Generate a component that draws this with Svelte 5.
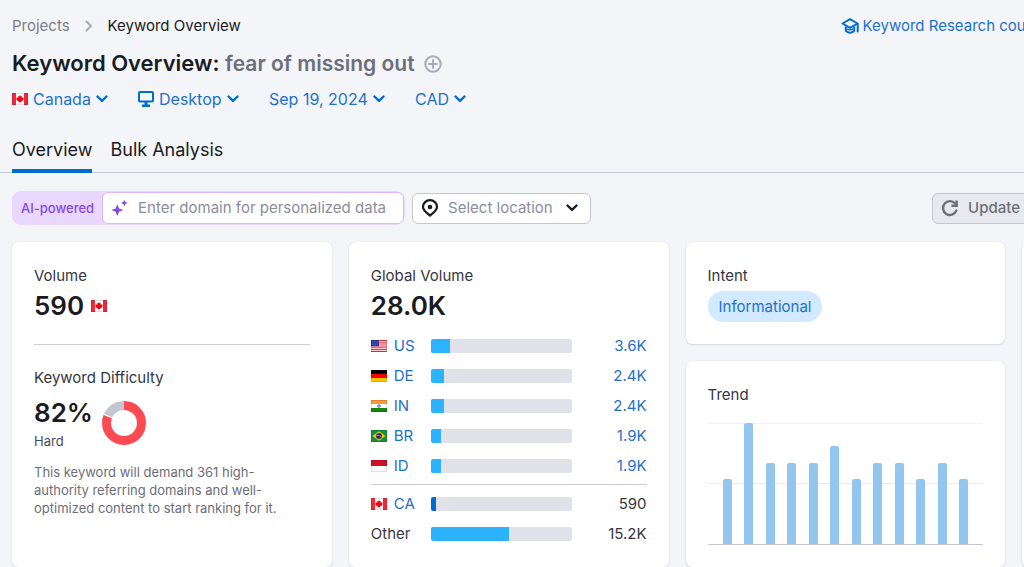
<script lang="ts">
	const filters = [
		{ label: 'Country', value: 'Canada', icon: 'ca' },
		{ label: 'Device', value: 'Desktop', icon: 'desktop' },
		{ label: 'Date', value: 'Sep 19, 2024', icon: '' },
		{ label: 'Currency', value: 'CAD', icon: '' }
	];

	const countries = [
		{ code: 'US', share: 13, volume: '3.6K' },
		{ code: 'DE', share: 9, volume: '2.4K' },
		{ code: 'IN', share: 9, volume: '2.4K' },
		{ code: 'BR', share: 7, volume: '1.9K' },
		{ code: 'ID', share: 7, volume: '1.9K' }
	];

	const trend = [54, 100, 67, 67, 67, 81, 54, 67, 67, 54, 67, 54];

	let tab = $state('Overview');
	let domain = $state('');
</script>

{#snippet chevron()}
	<svg class="chevron" width="12" height="8" viewBox="0 0 12 8" aria-hidden="true">
		<path d="M1.5 1.5 6 5.9l4.500-4.400" fill="none" stroke="currentColor" stroke-width="2.400" stroke-linecap="round" stroke-linejoin="round" />
	</svg>
{/snippet}

{#snippet flag(code: string)}
	<svg class="flag" width="16" height="12" viewBox="0 0 16 12" aria-hidden="true">
		{#if code === 'CA'}
			<path fill="#fff" d="M0 0h16v12H0z" />
			<path fill="#f02a3a" d="M0 0h4v12H0zM12 0h4v12h-4z" />
			<path fill="#f5000c" d="m8 2 1 1.500.9-.4-.2 2 1-.8 1 .8-.5 1.200.3.600-2.400 1.600.1.700-1-.1V10.500h-.5V9.100l-1 .1.100-.7-2.400-1.600.3-.6L4.300 5.100l1-.8 1 .8-.2-2 .9.4z" />
		{:else if code === 'US'}
			<path fill="#fff" d="M0 0h16v12H0z" />
			<path stroke="#f5303c" stroke-width="1.200" d="M0 .6h16M0 2.800h16M0 5h16M0 7.200h16M0 9.400h16M0 11.400h16" />
			<path fill="#2a36a0" d="M0 0h8v6.200H0z" />
			<path stroke="#8d94d0" stroke-width=".6" stroke-dasharray=".7 1" d="M1 1.500h6.500M1.500 3h6M1 4.500h6.500" />
		{:else if code === 'DE'}
			<path d="M0 0h16v4H0z" />
			<path fill="#f00" d="M0 4h16v4H0z" />
			<path fill="#fdc500" d="M0 8h16v4H0z" />
		{:else if code === 'IN'}
			<path fill="#fff" d="M0 0h16v12H0z" />
			<path fill="#ff9a33" d="M0 0h16v4H0z" />
			<path fill="#128807" d="M0 8h16v4H0z" />
			<circle cx="8" cy="6" r="1.500" fill="#8f9bd8" stroke="#5366b8" stroke-width=".5" />
		{:else if code === 'BR'}
			<path fill="#12923f" d="M0 0h16v12H0z" />
			<path fill="#f8c300" d="m8 1.200 6.600 4.800L8 10.800 1.400 6z" />
			<circle cx="8" cy="6" r="2.900" fill="#2b2a73" />
			<path fill="none" stroke="#b9bedc" stroke-width=".7" d="M5.400 5.200q3-.4 5.100 1.700" />
		{:else}
			<path fill="#fff" d="M0 0h16v12H0z" />
			<path fill="#ce1126" d="M0 0h16v6H0z" />
		{/if}
		<path fill="none" stroke="#000" stroke-opacity=".12" d="M.5.5h15v11H.5z" />
	</svg>
{/snippet}

<div class="page">
	<header>
		<div class="top-row">
			<nav class="breadcrumb" aria-label="Breadcrumb">
				<a href="#projects">Projects</a>
				<svg width="8" height="12" viewBox="0 0 8 12" aria-hidden="true">
					<path d="m1.500 1.500 4.500 4.500-4.500 4.500" fill="none" stroke="#a9abb6" stroke-width="2" stroke-linecap="round" stroke-linejoin="round" />
				</svg>
				<span>Keyword Overview</span>
			</nav>
			<a class="course" href="#course">
				<svg width="18" height="16" viewBox="0 0 18 16" fill="none" stroke="currentColor" stroke-width="2" stroke-linejoin="round" aria-hidden="true">
					<path d="M1.500 5.500 9 1.200l7.500 4.300L9 9.800z" />
					<path d="M4.800 8.500v4.200Q9 16.800 13.200 12.700V8.500" />
					<path d="M6 10.800q3 2 6 0" stroke-width="1.400" />
					<path d="M16.700 6v7.500" stroke-linecap="round" />
				</svg>
				Keyword Research course
			</a>
		</div>

		<div class="title-row">
			<h1>Keyword Overview: <span>fear of missing out</span></h1>
			<button class="add" aria-label="Add keyword to list">
				<svg width="18" height="18" viewBox="0 0 18 18" fill="none" stroke="#a9abb6" stroke-width="2" aria-hidden="true">
					<circle cx="9" cy="9" r="7.700" />
					<path d="M9 5v8M5 9h8" stroke-linecap="round" />
				</svg>
			</button>
		</div>

		<div class="filters">
			{#each filters as f}
				<label class="filter">
					{#if f.icon === 'ca'}
						{@render flag('CA')}
					{:else if f.icon === 'desktop'}
						<svg width="16" height="16" viewBox="0 0 16 16" aria-hidden="true">
							<rect x="1" y="1" width="14" height="9.500" rx="1" fill="none" stroke="currentColor" stroke-width="2" />
							<path d="M6.500 10.500h3v3h2.500V16H4v-2.500h2.500z" fill="currentColor" />
						</svg>
					{/if}
					<select aria-label={f.label}>
						<option>{f.value}</option>
					</select>
					{@render chevron()}
				</label>
			{/each}
		</div>

		<div class="tabs" role="tablist">
			{#each ['Overview', 'Bulk Analysis'] as name}
				<button role="tab" aria-selected={tab === name} class:active={tab === name} onclick={() => (tab = name)}>{name}</button>
			{/each}
		</div>
	</header>

	<main>
		<div class="toolbar">
			<div class="ai-field">
				<label for="domain">AI-powered</label>
				<div class="ai-input">
					<svg width="18" height="18" viewBox="0 0 18 18" fill="#8649e1" aria-hidden="true">
						<path d="M6.300 5.200 8 9.400l4.400 1.700L8 12.800 6.300 17l-1.700-4.200L.4 11.100l4.200-1.700zM13.300.8l1 2.200 2.500 1-2.500 1-1 2.400-1-2.400-2.400-1 2.400-1z" />
					</svg>
					<input id="domain" type="text" bind:value={domain} placeholder="Enter domain for personalized data" />
				</div>
			</div>

			<label class="location">
				<svg width="18" height="18" viewBox="0 0 18 18" aria-hidden="true">
					<path d="M9 16.600C5.500 13.500 2 11.200 2 7.900a7 6.800 0 0 1 14 0c0 3.300-3.500 5.600-7 8.700z" fill="none" stroke="#191b23" stroke-width="2.200" stroke-linejoin="round" />
					<circle cx="9" cy="8" r="2.300" fill="#191b23" />
				</svg>
				<select aria-label="Location">
					<option>Select location</option>
				</select>
				{@render chevron()}
			</label>

			<button class="update">
				<svg width="18" height="18" viewBox="0 0 18 18" fill="none" stroke="currentColor" stroke-width="2.400" aria-hidden="true">
					<path d="M15.300 11.600A6.900 6.900 0 1 1 14.200 4.600" stroke-linecap="round" />
					<path d="M15.700 1.500v5.300h-5.300" />
				</svg>
				Update
			</button>
		</div>

		<div class="cards">
			<section class="card">
				<h2>Volume</h2>
				<p class="figure">590 {@render flag('CA')}</p>
				<hr />
				<h2>Keyword Difficulty</h2>
				<div class="difficulty">
					<div>
						<p class="figure">82%</p>
						<p class="level">Hard</p>
					</div>
					<svg width="44" height="44" viewBox="0 0 44 44" fill="none" stroke-width="9" aria-hidden="true">
						<circle cx="22" cy="22" r="17.500" stroke="#c4c7cf" />
						<circle cx="22" cy="22" r="17.500" stroke="#fff" pathLength="100" stroke-dasharray="82 100" transform="rotate(-90 22 22)" />
						<circle cx="22" cy="22" r="17.500" stroke="#ff4953" pathLength="100" stroke-dasharray="81 100" transform="rotate(-90 22 22)" />
					</svg>
				</div>
				<p class="note">This keyword will demand 361 high-authority referring domains and well-optimized content to start ranking for it.</p>
			</section>

			<section class="card">
				<h2>Global Volume</h2>
				<p class="figure">28.0K</p>
				<table aria-label="Volume by country">
					<tbody>
						{#each countries as c}
							<tr>
								<th scope="row"><a href="#{c.code}">{@render flag(c.code)}{c.code}</a></th>
								<td><div class="bar"><div class="fill" style="width: {c.share}%"></div></div></td>
								<td class="num"><a href="#{c.code}">{c.volume}</a></td>
							</tr>
						{/each}
					</tbody>
					<tbody class="rest">
						<tr>
							<th scope="row"><a href="#CA">{@render flag('CA')}CA</a></th>
							<td><div class="bar"><div class="fill own" style="width: 3%"></div></div></td>
							<td class="num">590</td>
						</tr>
						<tr>
							<th scope="row">Other</th>
							<td><div class="bar"><div class="fill" style="width: 55%"></div></div></td>
							<td class="num">15.2K</td>
						</tr>
					</tbody>
				</table>
			</section>

			<div class="stack">
				<section class="card">
					<h2>Intent</h2>
					<button class="intent">Informational</button>
				</section>
				<section class="card grow">
					<h2>Trend</h2>
					<div class="chart">
						{#each trend as t}
							<div class="column" style="height: {t}%"></div>
						{/each}
					</div>
				</section>
			</div>

			<section class="card"></section>
		</div>
	</main>
</div>

<style>
	:global(body) {
		background: #f4f5f9;
	}
	.page {
		overflow: hidden;
		font: 15px/24px Inter, "Liberation Sans", sans-serif;
		color: #191b23;
	}
	h1, h2, p { margin: 0; }
	a { color: #1f70cc; text-decoration: none; }
	button, input, select {
		font: inherit;
		color: inherit;
		border: 0;
		padding: 0;
		background: none;
	}
	button, select { cursor: pointer; }
	svg { flex: none; }
	select {
		appearance: none;
		margin-right: -18px;
		padding-right: 18px;
		line-height: 24px;
	}
	.chevron { pointer-events: none; }

	header {
		padding: 14px 0 0 12px;
		border-bottom: 1px solid #c4c7cf;
	}
	.top-row {
		display: flex;
		justify-content: space-between;
		margin-right: -24px;
	}
	.breadcrumb {
		display: flex;
		align-items: center;
		gap: 15px;
	}
	.breadcrumb a { color: #7c7e8a; }
	.course {
		display: flex;
		align-items: center;
		gap: 4px;
		white-space: nowrap;
	}
	.course svg { color: #006dca; }
	.title-row {
		display: flex;
		align-items: center;
		gap: 9px;
		margin-top: 9px;
	}
	h1 {
		font-size: 22px;
		line-height: 32px;
		font-weight: 600;
	}
	h1 span { color: #6c6e79; font-size: 21px; }
	.add { display: flex; }

	.filters {
		display: flex;
		gap: 30px;
		margin-top: 7px;
		font-size: 16px;
	}
	.filter {
		display: flex;
		align-items: center;
		gap: 5px;
		color: #006dca;
	}
	.filter select { color: #1f70cc; }

	.tabs {
		display: flex;
		gap: 18px;
		margin: 27px 0 -1px;
		font-size: 18px;
	}
	.tabs button {
		padding-bottom: 7px;
		border-bottom: 4px solid transparent;
	}
	.tabs .active { border-color: #006dca; }

	main { padding: 18px 0 0 12px; }
	.toolbar {
		display: flex;
		align-items: center;
		gap: 7px;
		margin-right: -8px;
	}
	.ai-field {
		display: flex;
		align-items: center;
		padding: 1px;
		border-radius: 9px;
		background: #e9d7ff;
	}
	.ai-field label {
		padding: 0 8px;
		font-size: 13px;
		font-weight: 500;
		color: #8649e1;
	}
	.ai-input {
		display: flex;
		align-items: center;
		gap: 9px;
		height: 30px;
		padding: 0 9px 0 8px;
		border: 1px solid #dcb8ff;
		border-radius: 6px;
		background: #fff;
	}
	.ai-input input {
		width: 256px;
		outline: 0;
	}
	.ai-input input::placeholder { color: #8a8e9b; opacity: 1; }
	.location {
		display: flex;
		align-items: center;
		gap: 9px;
		height: 29px;
		padding: 0 12px 0 8px;
		border: 1px solid #c4c7cf;
		border-radius: 6px;
		background: #fff;
	}
	.location select {
		padding-right: 22px;
		color: #8a8e9b;
	}
	.update {
		display: flex;
		align-items: center;
		gap: 9px;
		height: 31px;
		margin-left: auto;
		padding: 0 11px 0 8px;
		border: 1px solid #c4c7cf;
		border-radius: 6px;
		background: #e8e9ee;
		font-weight: 500;
		color: #6c6e79;
	}

	.cards {
		display: grid;
		grid-template-columns: repeat(4, 31.6%);
		gap: 17px;
		padding-bottom: 1px;
		margin-top: 17px;
	}
	.stack {
		display: flex;
		flex-direction: column;
		gap: 17px;
	}
	.card {
		padding: 22px;
		border-radius: 6px;
		background: #fff;
		box-shadow: 0 0 1px rgba(25, 27, 35, 0.16), 0 1px 2px rgba(25, 27, 35, 0.12);
	}
	h2 {
		font-size: 15px;
		font-weight: 400;
		color: #34363f;
	}
	.figure {
		display: flex;
		align-items: center;
		gap: 7px;
		font-size: 26px;
		line-height: 36px;
		font-weight: 600;
	}
	hr {
		height: 1px;
		margin: 20px 0 21px;
		border: 0;
		background: #c9cbd5;
	}
	.difficulty {
		display: flex;
		align-items: center;
		gap: 9px;
		margin-top: 5px;
	}
	.level {
		font-size: 13px;
		line-height: 20px;
		color: #484a54;
	}
	.note {
		max-width: 256px;
		margin-top: 12px;
		font-size: 13px;
		line-height: 18px;
		color: #6c6e79;
	}

	table {
		width: 100%;
		margin: 7px 0 -5px;
		border-collapse: collapse;
	}
	th, td {
		height: 30px;
		padding: 0;
		font-weight: 400;
		text-align: left;
		color: #34363f;
	}
	th { width: 22%; }
	th a {
		display: flex;
		align-items: center;
		gap: 7px;
	}
	.num { width: 27%; text-align: right; }
	.rest { border-top: 1px solid #c9cbd5; }
	.rest tr:first-child > * { padding-top: 4px; }
	tbody:first-child tr:last-child > * { padding-bottom: 3px; }
	.bar {
		height: 14px;
		border-radius: 2px;
		background: #e0e1e9;
		overflow: hidden;
	}
	.fill { height: 100%; background: #2bb3ff; }
	.own { background: #006dca; }

	.intent {
		height: 31px;
		margin-top: 3px;
		padding: 0 11px;
		border-radius: 16px;
		background: #d1eaff;
		color: #1f70cc;
	}
	.grow {
		flex: 1;
	}
	.chart {
		display: flex;
		align-items: flex-end;
		justify-content: space-between;
		height: 121px;
		margin-top: 16px;
		padding: 0 15px;
		border-bottom: 1px solid #c4c7cf;
		background: linear-gradient(#f0f1f4, #f0f1f4) 0 0 / 100% 1px no-repeat, linear-gradient(#ebecf0, #ebecf0) 0 50% / 100% 1px no-repeat;
	}
	.column {
		width: 9px;
		border-radius: 2px 2px 0 0;
		background: #92c6ee;
	}
</style>
